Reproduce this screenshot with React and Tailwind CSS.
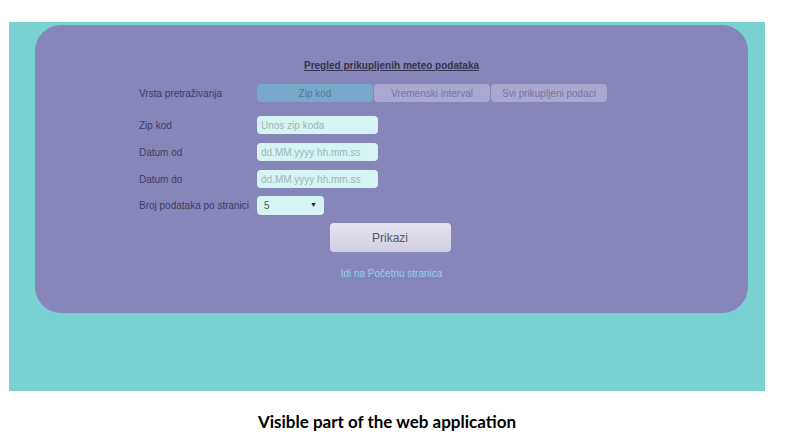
import React, { useState } from "react";

const tabs = ["Zip kod", "Vremenski interval", "Svi prikupljeni podaci"];

const Row = ({ label, children, className = "" }) => (
  <div className={`flex items-center ${className}`}>
    <div className="w-[118px] text-[10px] text-[#3e3d60]">{label}</div>
    {children}
  </div>
);

const TextInput = ({ placeholder }) => (
  <input
    type="text"
    placeholder={placeholder}
    className="w-[121px] h-[18px] rounded-[4px] bg-[#d6f4f4] px-[4px] text-[10px] text-[#556] placeholder:text-[#9fb4b6] outline-none"
  />
);

export default function App() {
  const [active, setActive] = useState(0);

  return (
    <div className="w-[786px] h-[439px] bg-white font-['Liberation_Sans',Arial,sans-serif]">
      <div className="pt-[22px] pl-[9px]">
        <div className="w-[756px] h-[369px] bg-[#79d2d1] pt-[3px] pl-[26px]">
          <div className="w-[713px] h-[288px] rounded-[26px] bg-[#8786ba] pt-[35px]">
            <h1 className="text-center text-[10px] font-bold underline text-[#34344f] leading-[12px]">
              Pregled prikupljenih meteo podataka
            </h1>

            <div className="pl-[104px] mt-[12px]">
              <Row label="Vrsta pretraživanja">
                <div className="flex gap-[1px]">
                  {tabs.map((t, i) => (
                    <button
                      key={t}
                      onClick={() => setActive(i)}
                      className={`w-[116px] h-[18px] rounded-[4px] text-[10px] ${
                        i === active
                          ? "bg-[#79a9c9] text-[#5a7898]"
                          : "bg-[#aaa8cf] text-[#76759f]"
                      }`}
                    >
                      {t}
                    </button>
                  ))}
                </div>
              </Row>

              <Row label="Zip kod" className="mt-[14px]">
                <TextInput placeholder="Unos zip koda" />
              </Row>
              <Row label="Datum od" className="mt-[9px]">
                <TextInput placeholder="dd.MM.yyyy hh.mm.ss" />
              </Row>
              <Row label="Datum do" className="mt-[9px]">
                <TextInput placeholder="dd.MM.yyyy hh.mm.ss" />
              </Row>
              <Row label="Broj podataka po stranici" className="mt-[8px]">
                <div className="w-[67px] h-[19px] rounded-[4px] bg-[#d6f4f4] flex items-center justify-between px-[7px] text-[10px] text-[#555]">
                  <span>5</span>
                  <span className="text-[7px] text-[#222]">▼</span>
                </div>
              </Row>
            </div>

            <div className="flex justify-center mt-[8px] pr-[3px]">
              <button className="w-[121px] h-[29px] rounded-[4px] bg-gradient-to-b from-[#e6e4f0] to-[#d0cee2] text-[12px] text-[#555566]">
                Prikazi
              </button>
            </div>

            <div className="text-center mt-[14px] text-[10px] text-[#8fd2ea]">
              <a href="#">Idi na Početnu stranica</a>
            </div>
          </div>
        </div>
      </div>

      <p className="mt-[21px] text-center pr-[12px] font-['Lato',sans-serif] font-bold text-[17px] leading-[20px] text-black">
        Visible part of the web application
      </p>
    </div>
  );
}
